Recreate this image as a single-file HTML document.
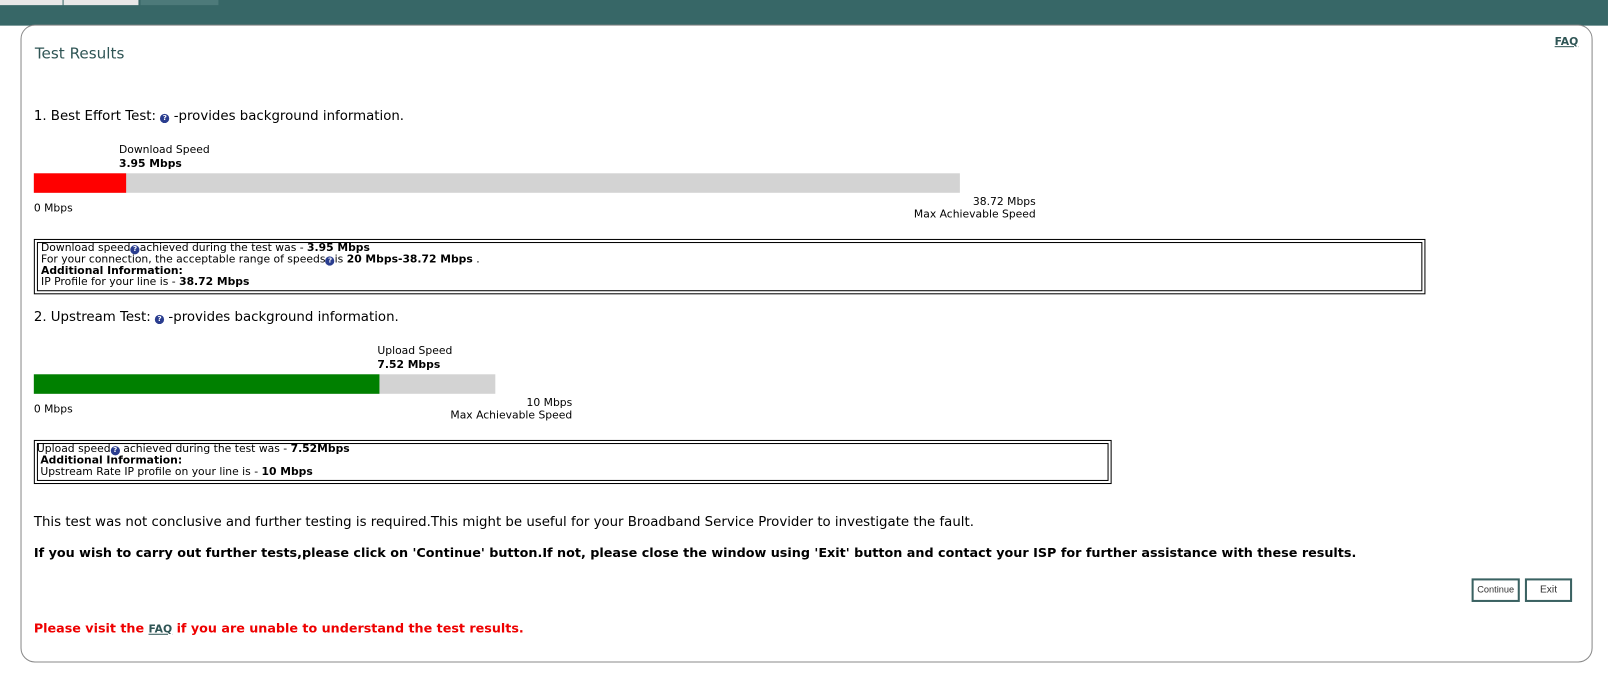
<!DOCTYPE html>
<html><head><style>
body{margin:0;width:1608px;height:693px;background:#fff;font-family:"DejaVu Sans","Liberation Sans",sans-serif;overflow:hidden;color:#000}
#w{position:absolute;left:0;top:0;width:1568px;height:676px;transform:scale(1.0255);transform-origin:0 0}
.a{position:absolute;white-space:nowrap}
.s{font-size:10.5px}
.m{font-size:13px}
.q{display:inline-block;width:9px;height:9px;border-radius:50%;background:#2a3d8f;color:#fff;font-size:7px;line-height:9px;text-align:center;font-weight:bold;vertical-align:0}
.box{position:absolute;border:1px solid #000;outline:1px solid #000;outline-offset:-4px;padding:3px 6px;font-size:10.5px;line-height:11px;overflow:hidden}
.btn{position:absolute;border:2px solid #3a6262;font-family:"Liberation Sans",sans-serif;font-size:10px;text-align:center;color:#333}
</style></head><body><div id="w">
<div class="a" style="left:0;top:0;width:1568px;height:25px;background:#376767"></div>
<div class="a" style="left:0;top:0;width:61px;height:5px;background:#e8e8e8"></div>
<div class="a" style="left:62px;top:0;width:73px;height:5px;background:#e8e8e8"></div>
<div class="a" style="left:137px;top:0;width:76px;height:5px;background:#4d7a7a"></div>
<div class="a" style="left:20px;top:24px;width:1531px;height:620px;border:1px solid #888;border-radius:14px;background:#fff"></div>
<div class="a" style="left:34px;top:44px;font-size:14.8px;color:#2f5555">Test Results</div>
<div class="a" style="left:1516px;top:35px;font-size:10.5px;font-weight:bold;color:#2f5555;text-decoration:underline">FAQ</div>
<div class="a m" style="left:33px;top:106px">1. Best Effort Test: <span class="q">?</span> -provides background information.</div>
<div class="a s" style="left:116px;top:139px;line-height:14px">Download Speed<br><b>3.95 Mbps</b></div>
<div class="a" style="left:33px;top:169px;width:903px;height:19px;background:#d3d3d3"></div>
<div class="a" style="left:33px;top:169px;width:90px;height:19px;background:#f00"></div>
<div class="a s" style="left:33px;top:197px">0 Mbps</div>
<div class="a s" style="left:810px;top:191px;text-align:right;width:200px;line-height:12px">38.72 Mbps<br>Max Achievable Speed</div>
<div class="box" style="left:33px;top:233px;width:1343px;height:46px">Download speed<span class="q">?</span>achieved during the test was - <b>3.95 Mbps</b><br>For your connection, the acceptable range of speeds<span class="q">?</span>is <b>20 Mbps-38.72 Mbps</b> .<br><b>Additional Information:</b><br>IP Profile for your line is - <b>38.72 Mbps</b></div>
<div class="a m" style="left:33px;top:302px">2. Upstream Test: <span class="q">?</span> -provides background information.</div>
<div class="a s" style="left:368px;top:335px;line-height:14px">Upload Speed<br><b>7.52 Mbps</b></div>
<div class="a" style="left:33px;top:365px;width:450px;height:19px;background:#d3d3d3"></div>
<div class="a" style="left:33px;top:365px;width:337px;height:19px;background:#008000"></div>
<div class="a s" style="left:33px;top:393px">0 Mbps</div>
<div class="a s" style="left:358px;top:387px;text-align:right;width:200px;line-height:12px">10 Mbps<br>Max Achievable Speed</div>
<div class="box" style="left:33px;top:429px;width:1045px;height:35px;padding:3px 2px">Upload speed<span class="q">?</span> achieved during the test was - <b>7.52Mbps</b><br>&nbsp;<b>Additional Information:</b><br>&nbsp;Upstream Rate IP profile on your line is - <b>10 Mbps</b></div>
<div class="a m" style="left:33px;top:502px">This test was not conclusive and further testing is required.This might be useful for your Broadband Service Provider to investigate the fault.</div>
<div class="a" style="left:33px;top:531px;font-weight:bold;font-size:12.45px">If you wish to carry out further tests,please click on 'Continue' button.If not, please close the window using 'Exit' button and contact your ISP for further assistance with these results.</div>
<div class="btn" style="left:1435px;top:564px;width:43px;height:19px;line-height:19px;font-size:9px">Continue</div>
<div class="btn" style="left:1487px;top:564px;width:42px;height:19px;line-height:19px">Exit</div>
<div class="a" style="left:33px;top:605px;font-weight:bold;font-size:12.4px;color:#e00">Please visit the <span style="color:#2f5555;font-size:10.5px;text-decoration:underline">FAQ</span> if you are unable to understand the test results.</div>
</div></body></html>
